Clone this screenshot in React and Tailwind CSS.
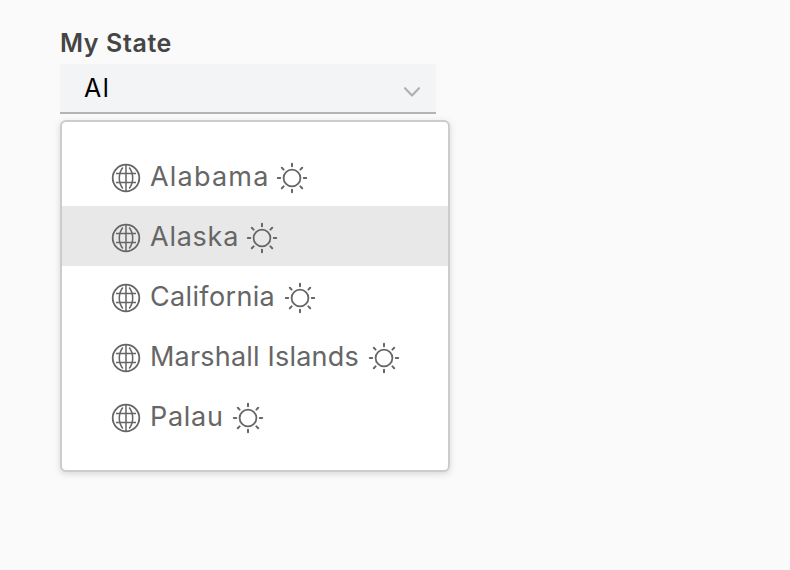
const states = [
  { name: 'Alabama', box: 'w-[118px]', spacing: 'tracking-[1.2px]' },
  { name: 'Alaska', box: 'w-[88px]', spacing: 'tracking-[0.75px]', active: true },
  { name: 'California', box: 'w-[126px]', spacing: 'tracking-[0.35px]' },
  { name: 'Marshall Islands', box: 'w-[210px]', spacing: 'tracking-[0.2px]' },
  { name: 'Palau', box: 'w-[74px]', spacing: 'tracking-[0.7px]' },
];

function Globe() {
  return (
    <svg className="mt-1 size-8 shrink-0" viewBox="-16 -16 32 32" fill="none" stroke="currentColor" strokeWidth="1.8">
      <circle r="13.3" />
      <path d="M0-13V13M-10-4.5H10M-10 4.5H10" strokeWidth="1.5" />
      <path d="M-3.2-10.5Q-6.7-6-6.7 0T-3.2 10.5M3.2-10.5Q6.7-6 6.7 0T3.2 10.5" strokeWidth="1.5" />
    </svg>
  );
}

function Sun() {
  return (
    <svg className="mt-1 size-8 shrink-0" viewBox="-16 -16 32 32" fill="none" stroke="currentColor" strokeWidth="2">
      <circle r="8.4" strokeWidth="1.8" />
      <path
        strokeLinecap="round"
        d="M0-14.2V-11.8M0 11.8V14.2M-14.2 0H-11.8M11.8 0H14.2M-10.2-10.2L-8.4-8.4M10.2-10.2L8.4-8.4M-10.2 10.2L-8.4 8.4M10.2 10.2L8.4 8.4"
      />
    </svg>
  );
}

export default function App() {
  return (
    <div className="flex h-[570px] w-[790px] flex-col items-start bg-[#fafafa] pl-[60px] pt-7 font-['Inter','Liberation_Sans',sans-serif]">
      <label htmlFor="state" className="h-9 whitespace-nowrap text-[25px] font-semibold leading-[31px] tracking-[0.6px] text-[#454545]">
        My State
      </label>
      <div className="flex h-[50px] w-[376px] items-center justify-between border-b-2 border-[#b3b3b3] bg-[#f3f4f6] pl-6 pr-4">
        <span id="state" className="text-[25px] leading-[46px] tracking-[1.5px] text-black">Al</span>
        <svg className="mt-2 h-3 w-4" viewBox="0 0 16 12" fill="none" stroke="#b0b0b0" strokeWidth="2.2" strokeLinecap="round" strokeLinejoin="round">
          <path d="M1 2.2L8 9.5L15 2.2" />
        </svg>
      </div>
      <ul className="mt-1.5 h-[352px] w-[390px] rounded-md border-2 border-[#cccccc] bg-white py-6 shadow-[0_2px_6px_rgba(115,115,115,0.25)]">
        {states.map((s) => (
          <li key={s.name} className={`flex h-[60px] items-center pl-12 text-[#666666] ${s.active ? 'bg-[#e8e8e8]' : ''}`}>
            <Globe />
            <span className={`ml-2 mr-2 whitespace-nowrap pt-0.5 text-[27px] leading-[58px] ${s.box} ${s.spacing}`}>{s.name}</span>
            <Sun />
          </li>
        ))}
      </ul>
    </div>
  );
}
